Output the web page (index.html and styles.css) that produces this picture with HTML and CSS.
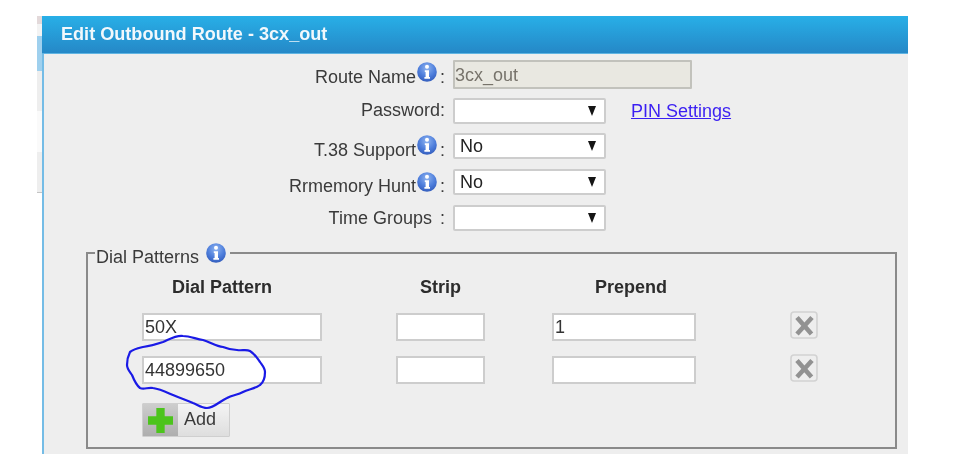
FILE: index.html
```html
<!DOCTYPE html>
<html lang="en">
<head>
<meta charset="utf-8">
<title>Edit Outbound Route</title>
<link rel="stylesheet" href="styles.css">
</head>
<body>
<svg class="defs" width="0" height="0" aria-hidden="true">
  <defs>
    <radialGradient id="infoFill" cx="50%" cy="30%" r="75%">
      <stop offset="0" stop-color="#8fb4f0"/>
      <stop offset=".55" stop-color="#4f7fdc"/>
      <stop offset="1" stop-color="#2f58b8"/>
    </radialGradient>
    <symbol id="info" viewBox="0 0 20 20">
      <circle cx="10" cy="10" r="9.8" fill="url(#infoFill)"/>
      <circle cx="10" cy="4.8" r="2" fill="#fff"/>
      <path d="M7.8 8.2h4.2v6.8h1v1.8H7.4V15h1.2v-5h-.8z" fill="#fff"/>
    </symbol>
    <symbol id="del" viewBox="0 0 28 28">
      <rect x="1" y="1" width="26" height="26" rx="3" fill="#eeeeee" stroke="#d2d2d2" stroke-width="1.6"/>
      <path d="M7 6.5 21.5 23M22 6.5 7 23" stroke="#929292" stroke-width="4.6" fill="none"/>
    </symbol>
  </defs>
</svg>
<div class="page">
  <div class="sliver">
    <div class="st st-a"></div>
    <div class="st st-b"></div>
    <div class="st st-c"></div>
    <div class="st st-d"></div>
    <div class="st st-e"></div>
    <div class="st st-f"></div>
  </div>
  <main class="panel">
    <h1 class="panel-head">Edit Outbound Route - 3cx_out</h1>
    <div class="form">
      <div class="label label-name">Route Name<svg class="info"><use href="#info"/></svg><span class="colon">:</span></div>
      <div class="ctl"><input class="field field-name" value="3cx_out" disabled></div>

      <div class="label label-pass">Password<span class="colon colon-tight">:</span></div>
      <div class="ctl"><span class="sel"><span class="sel-val"></span><span class="arrow"></span></span><a class="pin" href="#">PIN Settings</a></div>

      <div class="label label-t38">T.38 Support<svg class="info"><use href="#info"/></svg><span class="colon">:</span></div>
      <div class="ctl"><span class="sel"><span class="sel-val">No</span><span class="arrow"></span></span></div>

      <div class="label label-rr">Rrmemory Hunt<svg class="info"><use href="#info"/></svg><span class="colon">:</span></div>
      <div class="ctl"><span class="sel"><span class="sel-val">No</span><span class="arrow"></span></span></div>

      <div class="label label-time">Time Groups <span class="colon">:</span></div>
      <div class="ctl"><span class="sel"><span class="sel-val"></span><span class="arrow"></span></span></div>
    </div>

    <fieldset class="box">
      <legend class="box-legend">Dial Patterns <svg class="info info-legend"><use href="#info"/></svg></legend>
      <div class="heads">
        <div class="h h-pat">Dial Pattern</div>
        <div class="h h-strip">Strip</div>
        <div class="h h-pre">Prepend</div>
      </div>
      <div class="row">
        <input class="cell c-pat" value="50X">
        <input class="cell c-strip" value="">
        <input class="cell c-pre" value="1">
        <svg class="del"><use href="#del"/></svg>
      </div>
      <div class="row row-two">
        <input class="cell c-pat" value="44899650">
        <input class="cell c-strip" value="">
        <input class="cell c-pre" value="">
        <svg class="del"><use href="#del"/></svg>
      </div>
      <button class="add" type="button">
        <span class="add-ico"><svg class="plus" viewBox="0 0 24 24"><path d="M8 0h8v8h8v8h-8v8H8v-8H0V8h8z" fill="#4cc41c"/></svg></span>
        <span class="add-txt">Add</span>
      </button>
    </fieldset>
  </main>
</div>
<svg class="scribble" viewBox="0 0 979 454" aria-hidden="true">
  <path d="M130 352C134 349 139 348 143 347C150 346 157 344 163 342C170 339 176 335 183 336C190 336 196 339 203 340C210 342 216 346 223 347C228 349 232 350 237 350C242 351 246 349 250 351C255 354 257 358 260 362C262 365 265 368 265 372C265 378 264 382 260 385C255 389 248 389 243 392C238 395 232 395 227 398C220 401 214 408 207 408C202 408 198 405 193 403C186 400 180 398 173 395C166 392 160 389 153 388C148 387 144 390 140 388C136 385 134 380 132 375C130 372 127 369 127 365C127 360 128 356 130 352Z" fill="none" stroke="#1a1ae6" stroke-width="2.2"/>
</svg>
</body>
</html>
```
FILE: styles.css
```css
* { box-sizing: border-box; }
html, body { margin: 0; height: 454px; overflow: hidden; background: #fff; }
body { position: relative; font-family: "Liberation Sans", Arial, sans-serif; color: #3a3a3a; }
.defs { position: absolute; }

.page { display: flex; height: 454px; padding: 16px 71px 0 37px; filter: blur(.6px); }

.sliver { width: 5px; display: flex; flex-direction: column; }
.st { flex: none; }
.st-a { height: 8px; background: #e3d9da; }
.st-b { height: 12px; background: #f3f3f3; }
.st-c { height: 35px; background: #9fd0ee; }
.st-d { height: 40px; background: #eeeeee; }
.st-e { height: 41px; background: #fafafa; }
.st-f { height: 41px; background: #eeeeee; border-bottom: 1px solid #c4c4c4; }

.panel { flex: 1; background: #eeeeee; border-left: 2px solid #74bce6; min-width: 0; }
.panel-head {
  margin: 0 0 0 -2px; height: 38px; padding: 0 0 0 19px;
  background: linear-gradient(#28afe7, #2588c7);
  border-bottom: 1px solid #5fb4e2;
  color: #f2f8fc; font-size: 18.1px; font-weight: 700; line-height: 36px;
}

.form {
  display: grid; grid-template-columns: 401px 1fr; column-gap: 8px;
  grid-template-rows: 38px 35px 36px 36px 26px;
  padding-top: 6px;
}
.label { display: flex; justify-content: flex-end; font-size: 18px; white-space: pre; }
.label-name { padding-top: 7px; }
.label-pass { padding-top: 2px; }
.label-t38 { padding-top: 7px; }
.label-rr { padding-top: 7px; }
.label-time { padding-top: 3px; }
.colon { margin-left: 3px; }
.colon-tight { margin-left: 0; }
.info { width: 20px; height: 20px; flex: none; margin-top: -5px; margin-left: 1px; }
.label-t38 .info { margin-top: -5px; }
.label-rr .info { margin-top: -4px; }

.ctl { display: flex; align-items: flex-start; }
.field { font: 18px "Liberation Sans", Arial, sans-serif; }
.field-name {
  width: 239px; height: 29px; padding: 2px 1px 0 0; color: #77736b; opacity: 1;
  background: #e9e8e1; border: 2px solid #c2c2bc; border-radius: 1px;
}
.sel {
  width: 153px; height: 26px; display: flex; justify-content: space-between; align-items: center;
  padding: 0 8px 0 5px; background: #fff; border: 2px solid #cdcdcd; border-radius: 2px;
  font-size: 18px; color: #222;
}
.arrow { width: 0; height: 0; margin-left: auto; border-left: 4.5px solid transparent; border-right: 4.5px solid transparent; border-top: 10px solid #151515; }
.pin { margin: 3px 0 0 25px; font-size: 18px; color: #3a1ff2; }

.box {
  margin: 12px 0 0 42px; width: 811px; padding: 14px 0 10px 54px; min-width: 0;
  border: 2px solid #8a8a8a; height: 206px;
}
.box-legend { margin-left: -47px; padding: 0 4px 0 1px; height: 20px; display: flex; align-items: flex-start; font-size: 18px; line-height: 28px; white-space: pre; }
.info-legend { margin: 0 0 0 2px; }

.heads { display: flex; height: 20px; font-weight: 700; font-size: 18px; line-height: 20px; color: #2c2c2c; text-align: center; margin-bottom: 16px; }
.h-pat { width: 160px; }
.h-strip { width: 89px; margin-left: 94px; }
.h-pre { width: 158px; margin-left: 67px; }

.row { display: flex; align-items: flex-start; height: 28px; }
.row-two { margin-top: 15px; }
.cell {
  height: 28px; padding: 0 2px 0 1px; background: #fff; border: 2px solid #cdcdcd;
  font: 18px "Liberation Sans", Arial, sans-serif; color: #333; border-radius: 0;
}
.c-pat { width: 180px; }
.c-strip { width: 89px; margin-left: 74px; }
.c-pre { width: 144px; margin-left: 67px; }
.del { width: 28px; height: 28px; margin: -2px 0 0 94px; flex: none; }

.add {
  margin-top: 19px; width: 88px; height: 34px; padding: 0; display: flex; align-items: stretch;
  border: 1px solid #cfcfcf; background: linear-gradient(#f4f4f4, #dedede); border-radius: 1px;
  font: 18px "Liberation Sans", Arial, sans-serif; color: #3a3a3a;
}
.add-ico { width: 35px; display: flex; align-items: center; justify-content: center; background: linear-gradient(#cdcdcd, #aeaeae); }
.plus { width: 25px; height: 25px; }
.add-txt { flex: 1; text-align: left; padding-left: 6px; line-height: 31px; }

.scribble { position: absolute; left: 0; top: 0; width: 979px; height: 454px; pointer-events: none; filter: blur(.3px); }
```
